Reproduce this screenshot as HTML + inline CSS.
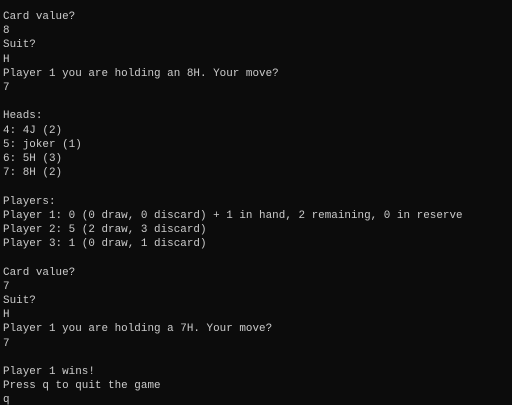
<!DOCTYPE html>
<html><head><meta charset="utf-8"><style>
html,body{margin:0;padding:0;background:#0c0c0c;width:512px;height:405px;overflow:hidden}
pre{margin:0;padding:10px 0 0 3px;font-family:"Liberation Mono",monospace;font-size:10.9px;line-height:14.2px;letter-spacing:0.03px;color:#cccccc}
</style></head><body><pre>Card value?
8
Suit?
H
Player 1 you are holding an 8H. Your move?
7

Heads:
4: 4J (2)
5: joker (1)
6: 5H (3)
7: 8H (2)

Players:
Player 1: 0 (0 draw, 0 discard) + 1 in hand, 2 remaining, 0 in reserve
Player 2: 5 (2 draw, 3 discard)
Player 3: 1 (0 draw, 1 discard)

Card value?
7
Suit?
H
Player 1 you are holding a 7H. Your move?
7

Player 1 wins!
Press q to quit the game
q</pre></body></html>
